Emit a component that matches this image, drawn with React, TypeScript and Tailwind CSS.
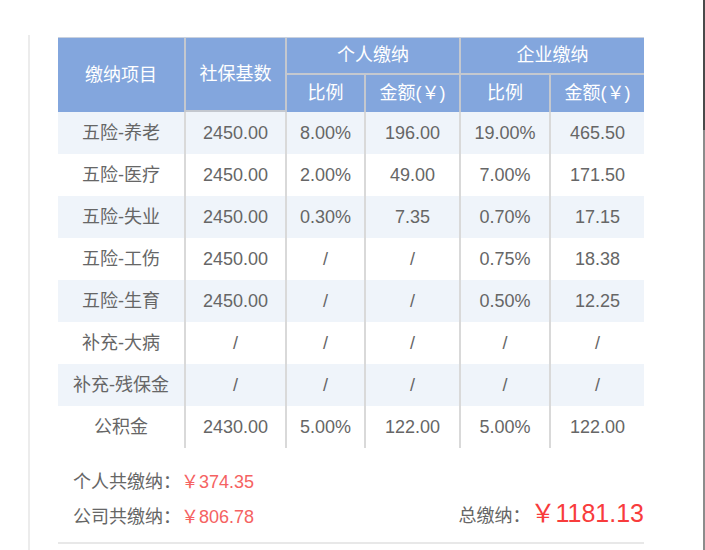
import React from "react";

const font = { fontFamily: '"Liberation Sans", "Noto Sans CJK SC", sans-serif' };

const rows: string[][] = [
  ["五险-养老", "2450.00", "8.00%", "196.00", "19.00%", "465.50"],
  ["五险-医疗", "2450.00", "2.00%", "49.00", "7.00%", "171.50"],
  ["五险-失业", "2450.00", "0.30%", "7.35", "0.70%", "17.15"],
  ["五险-工伤", "2450.00", "/", "/", "0.75%", "18.38"],
  ["五险-生育", "2450.00", "/", "/", "0.50%", "12.25"],
  ["补充-大病", "/", "/", "/", "/", "/"],
  ["补充-残保金", "/", "/", "/", "/", "/"],
  ["公积金", "2430.00", "5.00%", "122.00", "5.00%", "122.00"],
];

export default function App() {
  return (
    <div className="flex w-[705px] h-[550px] bg-white overflow-hidden" style={font}>
      <div className="w-[28px] shrink-0" />
      <div className="mt-[35px] w-[675px] shrink-0 border-l-2 border-[#ececec] pl-[28px] pt-[2px]">
        <div className="w-[586px]">
          {/* header */}
          <div className="grid grid-cols-[126px_101px_79px_95px_90px_95px] grid-rows-[37px_37px] bg-[#83a6dd] border-t border-[#c9d1de] text-white text-[18px]">
            <div className="row-span-2 flex items-center justify-center">缴纳项目</div>
            <div className="row-span-2 flex items-center justify-center border-l-2 border-b-2 border-[#c4c8cf]">社保基数</div>
            <div className="col-span-2 flex items-center justify-center border-l-2 border-b-2 border-[#c4c8cf]">个人缴纳</div>
            <div className="col-span-2 flex items-center justify-center border-l-2 border-b-2 border-[#c4c8cf]">企业缴纳</div>
            <div className="flex items-center justify-center border-l-2 border-[#c4c8cf]">比例</div>
            <div className="flex items-center justify-center border-l-2 border-[#c4c8cf]">金额(￥)</div>
            <div className="flex items-center justify-center border-l-2 border-[#c4c8cf]">比例</div>
            <div className="flex items-center justify-center border-l-2 border-[#c4c8cf]">金额(￥)</div>
          </div>
          {/* body */}
          <div className="grid grid-cols-[126px_101px_79px_95px_90px_95px] auto-rows-[42px] text-[18px] text-[#666666]">
            {rows.map((r, i) =>
              r.map((c, j) => (
                <div
                  key={i + "-" + j}
                  className={
                    "flex items-center justify-center " +
                    (i % 2 === 0 ? "bg-[#eff4fa] " : "bg-white ") +
                    (j > 0 ? "border-l-2 border-[#d9d9d9]" : "")
                  }
                >
                  {c}
                </div>
              ))
            )}
          </div>
          {/* footer */}
          <div className="flex items-end justify-between pt-[17px] pb-[7px] border-b-2 border-[#e8e8e8]">
            <div className="pl-[15px] text-[18px] leading-[35px]">
              <div className="flex">
                <span className="text-[#666666]">个人共缴纳：</span>
                <span className="text-[#f56262]">￥374.35</span>
              </div>
              <div className="flex">
                <span className="text-[#666666]">公司共缴纳：</span>
                <span className="text-[#f56262]">￥806.78</span>
              </div>
            </div>
            <div className="flex items-baseline pb-[5px]">
              <span className="text-[18px] text-[#666666]">总缴纳：</span>
              <span className="text-[25px] leading-[30px] text-[#f83c3c]">￥1181.13</span>
            </div>
          </div>
        </div>
      </div>
      <div className="w-[2px] shrink-0 flex flex-col">
        <div className="h-[130px] bg-[#4a4a4a]" />
        <div className="flex-1 bg-[#8c8c8c]" />
      </div>
    </div>
  );
}
